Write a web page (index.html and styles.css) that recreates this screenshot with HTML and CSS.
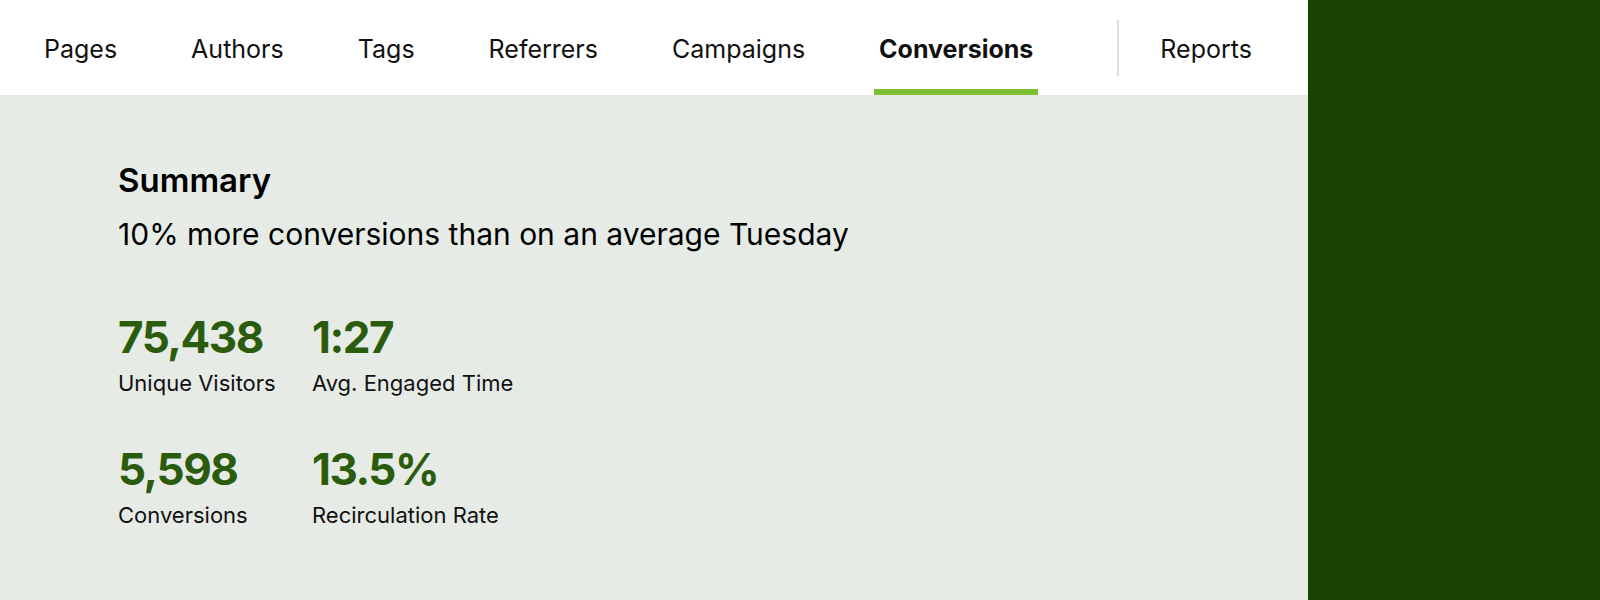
FILE: index.html
```html
<!DOCTYPE html>
<html>
<head>
<meta charset="utf-8">
<link rel="stylesheet" href="styles.css">
</head>
<body>
<div class="layout">
  <main class="main">
    <nav class="tabs">
      <a class="tab">Pages</a>
      <a class="tab">Authors</a>
      <a class="tab">Tags</a>
      <a class="tab">Referrers</a>
      <a class="tab">Campaigns</a>
      <a class="tab active">Conversions</a>
      <span class="divider"></span>
      <a class="tab">Reports</a>
    </nav>
    <section class="summary">
      <h2 class="title">Summary</h2>
      <p class="subtitle">10% more conversions than on an average Tuesday</p>
      <div class="stats">
        <div class="stat"><div class="value">75,438</div><div class="label">Unique Visitors</div></div>
        <div class="stat"><div class="value">1:27</div><div class="label">Avg. Engaged Time</div></div>
        <div class="stat"><div class="value">5,598</div><div class="label">Conversions</div></div>
        <div class="stat"><div class="value">13.5%</div><div class="label">Recirculation Rate</div></div>
      </div>
    </section>
  </main>
  <aside class="side"></aside>
</div>
</body>
</html>
```
FILE: styles.css
```css
* { box-sizing: border-box; }
html, body { margin: 0; padding: 0; }
body {
  font-family: Inter, "Noto Sans", sans-serif;
  color: #000;
  width: 1600px;
  height: 600px;
  overflow: hidden;
}
.layout {
  display: flex;
  height: 600px;
}
.main {
  width: 1308px;
  background: #e6ebe6;
}
.side {
  flex: 1;
  background: #1b4303;
}
.tabs {
  height: 95px;
  background: #fff;
  display: flex;
  align-items: stretch;
  gap: 64px;
  padding-left: 39px;
}
.tab {
  font-size: 25px;
  color: #111;
  display: flex;
  align-items: center;
  padding: 2px 5px 0;
  border-bottom: 6px solid transparent;
  border-top: 6px solid transparent;
}
.tab.active {
  font-weight: 700;
  border-bottom-color: #7dbf2e;
}
.divider {
  width: 2px;
  background: #d9ddd9;
  margin: 20px -28px 19px 15px;
}
.summary {
  padding: 65px 0 0 118px;
}
.title {
  margin: 0;
  font-size: 33px;
  font-weight: 600;
  line-height: 40px;
}
.subtitle {
  margin: 14px 0 0;
  font-size: 30px;
  line-height: 40px;
}
.stats {
  display: grid;
  grid-template-columns: 194px auto;
  grid-auto-rows: 132px;
  margin-top: 57px;
  width: 450px;
}
.value {
  font-size: 44px;
  font-weight: 700;
  color: #2b5c0e;
  line-height: 52px;
  letter-spacing: -1.5px;
}
.label {
  margin-top: 7px;
  font-size: 22px;
  line-height: 26px;
  color: #111;
}
```
